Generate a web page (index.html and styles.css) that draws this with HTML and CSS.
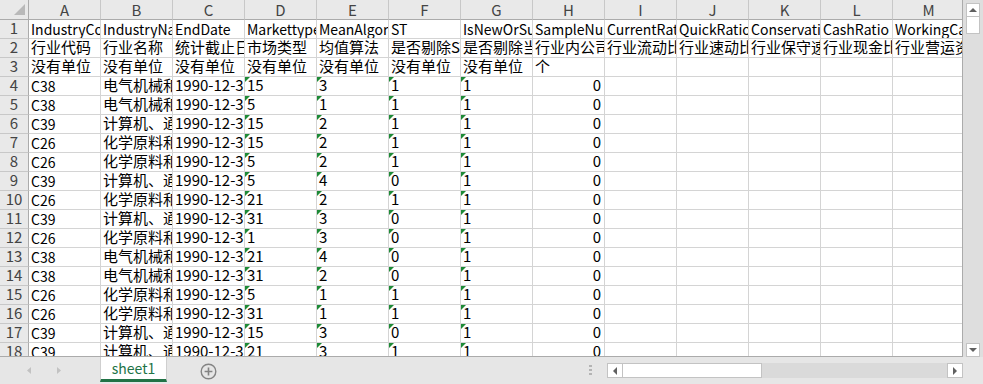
FILE: index.html
```html
<!DOCTYPE html>
<html lang="zh-CN">
<head>
<meta charset="utf-8">
<title>sheet1</title>
<link rel="stylesheet" href="styles.css">
</head>
<body>
<div class="app">
  <div class="main">
    <div class="grid">
      <div class="h corner"><span class="corner-tri"></span></div>
      <div class="h">A</div><div class="h">B</div><div class="h">C</div><div class="h">D</div><div class="h">E</div><div class="h">F</div><div class="h">G</div><div class="h">H</div><div class="h">I</div><div class="h">J</div><div class="h">K</div><div class="h">L</div><div class="h">M</div>

      <div class="rh">1</div><div class="c en">IndustryCode</div><div class="c en">IndustryName</div><div class="c en">EndDate</div><div class="c en">Markettype</div><div class="c en">MeanAlgorithm</div><div class="c en">ST</div><div class="c en">IsNewOrSuspend</div><div class="c en">SampleNumber</div><div class="c en">CurrentRatio</div><div class="c en">QuickRatio</div><div class="c en">ConservativeQuickRatio</div><div class="c en">CashRatio</div><div class="c en">WorkingCapital</div>

      <div class="rh">2</div><div class="c">行业代码</div><div class="c">行业名称</div><div class="c">统计截止日期</div><div class="c">市场类型</div><div class="c">均值算法</div><div class="c">是否剔除ST</div><div class="c">是否剔除当年新上市</div><div class="c">行业内公司数量</div><div class="c">行业流动比率</div><div class="c">行业速动比率</div><div class="c">行业保守速动比率</div><div class="c">行业现金比率</div><div class="c">行业营运资金</div>

      <div class="rh">3</div><div class="c">没有单位</div><div class="c">没有单位</div><div class="c">没有单位</div><div class="c">没有单位</div><div class="c">没有单位</div><div class="c">没有单位</div><div class="c">没有单位</div><div class="c">个</div><div class="c"></div><div class="c"></div><div class="c"></div><div class="c"></div><div class="c"></div>

      <div class="rh">4</div><div class="c en">C38</div><div class="c">电气机械和器材制造业</div><div class="c">1990-12-31</div><div class="c t">15</div><div class="c t">3</div><div class="c t">1</div><div class="c t">1</div><div class="c r">0</div><div class="c"></div><div class="c"></div><div class="c"></div><div class="c"></div><div class="c"></div>

      <div class="rh">5</div><div class="c en">C38</div><div class="c">电气机械和器材制造业</div><div class="c">1990-12-31</div><div class="c t">5</div><div class="c t">1</div><div class="c t">1</div><div class="c t">1</div><div class="c r">0</div><div class="c"></div><div class="c"></div><div class="c"></div><div class="c"></div><div class="c"></div>

      <div class="rh">6</div><div class="c en">C39</div><div class="c">计算机、通信和其他电子设备制造业</div><div class="c">1990-12-31</div><div class="c t">15</div><div class="c t">2</div><div class="c t">1</div><div class="c t">1</div><div class="c r">0</div><div class="c"></div><div class="c"></div><div class="c"></div><div class="c"></div><div class="c"></div>

      <div class="rh">7</div><div class="c en">C26</div><div class="c">化学原料和化学制品制造业</div><div class="c">1990-12-31</div><div class="c t">15</div><div class="c t">2</div><div class="c t">1</div><div class="c t">1</div><div class="c r">0</div><div class="c"></div><div class="c"></div><div class="c"></div><div class="c"></div><div class="c"></div>

      <div class="rh">8</div><div class="c en">C26</div><div class="c">化学原料和化学制品制造业</div><div class="c">1990-12-31</div><div class="c t">5</div><div class="c t">2</div><div class="c t">1</div><div class="c t">1</div><div class="c r">0</div><div class="c"></div><div class="c"></div><div class="c"></div><div class="c"></div><div class="c"></div>

      <div class="rh">9</div><div class="c en">C39</div><div class="c">计算机、通信和其他电子设备制造业</div><div class="c">1990-12-31</div><div class="c t">5</div><div class="c t">4</div><div class="c t">0</div><div class="c t">1</div><div class="c r">0</div><div class="c"></div><div class="c"></div><div class="c"></div><div class="c"></div><div class="c"></div>

      <div class="rh">10</div><div class="c en">C26</div><div class="c">化学原料和化学制品制造业</div><div class="c">1990-12-31</div><div class="c t">21</div><div class="c t">2</div><div class="c t">1</div><div class="c t">1</div><div class="c r">0</div><div class="c"></div><div class="c"></div><div class="c"></div><div class="c"></div><div class="c"></div>

      <div class="rh">11</div><div class="c en">C39</div><div class="c">计算机、通信和其他电子设备制造业</div><div class="c">1990-12-31</div><div class="c t">31</div><div class="c t">3</div><div class="c t">0</div><div class="c t">1</div><div class="c r">0</div><div class="c"></div><div class="c"></div><div class="c"></div><div class="c"></div><div class="c"></div>

      <div class="rh">12</div><div class="c en">C26</div><div class="c">化学原料和化学制品制造业</div><div class="c">1990-12-31</div><div class="c t">1</div><div class="c t">3</div><div class="c t">0</div><div class="c t">1</div><div class="c r">0</div><div class="c"></div><div class="c"></div><div class="c"></div><div class="c"></div><div class="c"></div>

      <div class="rh">13</div><div class="c en">C38</div><div class="c">电气机械和器材制造业</div><div class="c">1990-12-31</div><div class="c t">21</div><div class="c t">4</div><div class="c t">0</div><div class="c t">1</div><div class="c r">0</div><div class="c"></div><div class="c"></div><div class="c"></div><div class="c"></div><div class="c"></div>

      <div class="rh">14</div><div class="c en">C38</div><div class="c">电气机械和器材制造业</div><div class="c">1990-12-31</div><div class="c t">31</div><div class="c t">2</div><div class="c t">0</div><div class="c t">1</div><div class="c r">0</div><div class="c"></div><div class="c"></div><div class="c"></div><div class="c"></div><div class="c"></div>

      <div class="rh">15</div><div class="c en">C26</div><div class="c">化学原料和化学制品制造业</div><div class="c">1990-12-31</div><div class="c t">5</div><div class="c t">1</div><div class="c t">1</div><div class="c t">1</div><div class="c r">0</div><div class="c"></div><div class="c"></div><div class="c"></div><div class="c"></div><div class="c"></div>

      <div class="rh">16</div><div class="c en">C26</div><div class="c">化学原料和化学制品制造业</div><div class="c">1990-12-31</div><div class="c t">31</div><div class="c t">1</div><div class="c t">1</div><div class="c t">1</div><div class="c r">0</div><div class="c"></div><div class="c"></div><div class="c"></div><div class="c"></div><div class="c"></div>

      <div class="rh">17</div><div class="c en">C39</div><div class="c">计算机、通信和其他电子设备制造业</div><div class="c">1990-12-31</div><div class="c t">15</div><div class="c t">3</div><div class="c t">0</div><div class="c t">1</div><div class="c r">0</div><div class="c"></div><div class="c"></div><div class="c"></div><div class="c"></div><div class="c"></div>

      <div class="rh">18</div><div class="c en">C39</div><div class="c">计算机、通信和其他电子设备制造业</div><div class="c">1990-12-31</div><div class="c t">21</div><div class="c t">3</div><div class="c t">1</div><div class="c t">1</div><div class="c r">0</div><div class="c"></div><div class="c"></div><div class="c"></div><div class="c"></div><div class="c"></div>
    </div>
    <div class="vscroll">
      <div class="sbtn"><svg width="12" height="12" viewBox="0 0 12 12"><path d="M2 8 L10 8 L6 4 Z" fill="#606060"/></svg></div>
      <div class="vthumb"></div>
      <div class="vtrack"></div>
      <div class="sbtn"><svg width="12" height="12" viewBox="0 0 12 12"><path d="M2 4 L10 4 L6 8 Z" fill="#606060"/></svg></div>
    </div>
  </div>
  <div class="bottom">
    <div class="nav">
      <svg class="navl" width="4" height="7" viewBox="0 0 4 7"><path d="M4 0 L0 3.5 L4 7 Z" fill="#c2c2c2"/></svg>
      <svg class="navr" width="4" height="7" viewBox="0 0 4 7"><path d="M0 0 L4 3.5 L0 7 Z" fill="#c2c2c2"/></svg>
    </div>
    <div class="tab">sheet1</div>
    <svg class="plus" width="17" height="17" viewBox="0 0 17 17"><circle cx="8.5" cy="8.5" r="7.3" fill="none" stroke="#838383" stroke-width="1.4"/><path d="M8.5 4.6 V12.4 M4.6 8.5 H12.4" stroke="#838383" stroke-width="1.6"/></svg>
    <div class="spacer"></div>
    <div class="dots"><i></i><i></i><i></i></div>
    <div class="hscroll">
      <div class="hbtn"><svg width="6" height="8" viewBox="0 0 6 8"><path d="M5 0 L1 4 L5 8 Z" fill="#606060"/></svg></div>
      <div class="hthumb"></div>
      <div class="htrack"></div>
      <div class="hbtn"><svg width="6" height="8" viewBox="0 0 6 8"><path d="M1 0 L5 4 L1 8 Z" fill="#606060"/></svg></div>
    </div>
  </div>
</div>
</body>
</html>
```

FILE: styles.css
```css
html, body {
  margin: 0;
  padding: 0;
  background: #e6e6e6;
}
body {
  font-family: "Noto Sans CJK SC", "Noto Sans", sans-serif;
  font-size: 15px;
  color: #000;
}
.app {
  width: 983px;
  height: 384px;
  display: flex;
  flex-direction: column;
  overflow: hidden;
  background: #e6e6e6;
}
.main {
  display: flex;
  height: 357px;
}
.grid {
  box-sizing: border-box;
  width: 963px;
  height: 357px;
  border-right: 1px solid #ababab;
  border-bottom: 1px solid #ababab;
  overflow: hidden;
  display: grid;
  grid-template-columns: 29px repeat(13, 72px);
  grid-template-rows: 20px;
  grid-auto-rows: 19px;
  background: #fff;
}
.c {
  box-sizing: border-box;
  border-right: 1px solid #d4d4d4;
  border-bottom: 1px solid #d4d4d4;
  padding: 0 2px;
  font-size: 15px;
  line-height: 16px;
  white-space: nowrap;
  overflow: hidden;
  position: relative;
}
.c.en {
  font-size: 14px;
  padding-top: 1px;
}
.c.r {
  text-align: right;
  padding-right: 3px;
}
.c.t::before {
  content: "";
  position: absolute;
  left: 0;
  top: 0;
  border-top: 5px solid #1d8a36;
  border-right: 5px solid transparent;
}
.h {
  box-sizing: border-box;
  background: #e9e9e9;
  border-right: 1px solid #c8c8c8;
  border-bottom: 1px solid #ababab;
  color: #444;
  font-size: 15px;
  line-height: 19px;
  text-align: center;
}
.corner {
  position: relative;
  border-right: 1px solid #ababab;
}
.corner-tri {
  position: absolute;
  right: 3px;
  bottom: 4px;
  width: 0;
  height: 0;
  border-bottom: 11px solid #b9b9b9;
  border-left: 11px solid transparent;
}
.rh {
  box-sizing: border-box;
  background: #e9e9e9;
  border-right: 1px solid #ababab;
  border-bottom: 1px solid #c8c8c8;
  color: #444;
  font-size: 15px;
  line-height: 16px;
  text-align: center;
}
.vscroll {
  width: 20px;
  height: 357px;
  box-sizing: border-box;
  padding: 3px 3px 0 3px;
  display: flex;
  flex-direction: column;
  background: #dedede;
}
.sbtn {
  box-sizing: border-box;
  width: 14px;
  height: 14px;
  border: 1px solid #c3c3c3;
  background: #fff;
  display: flex;
  align-items: center;
  justify-content: center;
}
.vthumb {
  box-sizing: border-box;
  width: 14px;
  height: 17px;
  border: 1px solid #c3c3c3;
  border-top: none;
  background: #fff;
}
.vtrack {
  flex: 1;
}
.bottom {
  height: 27px;
  display: flex;
  align-items: flex-start;
  background: #e6e6e6;
}
.nav {
  width: 100px;
  height: 27px;
  display: flex;
  align-items: center;
  padding-left: 27px;
  box-sizing: border-box;
}
.navr {
  margin-left: 26px;
}
.tab {
  box-sizing: border-box;
  width: 67px;
  height: 25px;
  background: #fff;
  border-left: 1px solid #cfcfcf;
  border-right: 1px solid #cfcfcf;
  border-bottom: 3px solid #217346;
  color: #217346;
  font-size: 14px;
  line-height: 22px;
  text-align: center;
}
.plus {
  margin-left: 33px;
  margin-top: 6px;
}
.spacer {
  flex: 1;
}
.dots {
  width: 3px;
  margin-top: 8px;
  margin-right: 15px;
  display: flex;
  flex-direction: column;
  gap: 2px;
}
.dots i {
  display: block;
  width: 3px;
  height: 2px;
  background: #b4b4b4;
}
.hscroll {
  width: 356px;
  height: 15px;
  margin-top: 6px;
  margin-right: 20px;
  display: flex;
  background: #dadada;
}
.hbtn {
  box-sizing: border-box;
  width: 16px;
  height: 15px;
  border: 1px solid #c3c3c3;
  background: #fff;
  display: flex;
  align-items: center;
  justify-content: center;
}
.hthumb {
  box-sizing: border-box;
  width: 139px;
  height: 15px;
  border: 1px solid #c3c3c3;
  border-left: none;
  background: #fff;
}
.htrack {
  flex: 1;
}
```
